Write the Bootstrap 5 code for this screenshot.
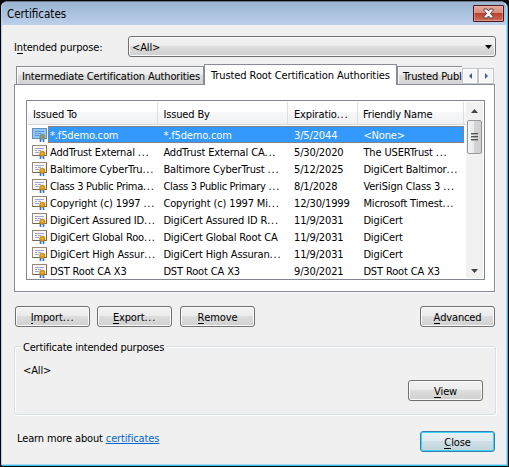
<!DOCTYPE html>
<html lang="en">
<head>
<meta charset="utf-8">
<meta name="viewport" content="width=device-width, initial-scale=1">
<title>Certificates</title>
<link rel="stylesheet" href="https://cdn.jsdelivr.net/npm/bootstrap@5.3.0/dist/css/bootstrap.min.css">
<style>
html,body{height:467px;margin:0;overflow:hidden;background:#050505}
body{font:11px/13px "DejaVu Sans Condensed","DejaVu Sans",sans-serif;font-stretch:condensed;letter-spacing:-.14px;color:#000}
.win{width:506px;height:464px;margin:1px 0 0 1px;background:#f0f0f0;border:1px solid #b5d0ec;border-top-color:#6d7785;border-right-color:#b5d0ec;border-radius:6px 6px 0 0;box-shadow:1px 1px 0 #27c5e8}
.titlebar{height:23px;background:linear-gradient(#9ab4d2,#bbd0ea);border-radius:5px 5px 0 0;padding:0 2px 0 5px;font-size:11.5px;letter-spacing:0}
.titletext{padding-top:6px}
.winclose{width:31px;height:17px;margin-top:3px;border:1px solid #4a1620;border-radius:1px;background:linear-gradient(#e9a99b 0,#d98a7b 45%,#b8402c 50%,#cf6c55 100%);box-shadow:inset 0 0 0 1px #efb8ae88;padding:0}
.winclose svg{display:block;margin:auto}
.content{padding:11px 10px 0 12px}
.win u{text-decoration:none;box-shadow:0 1px 0 #000;display:inline-block;line-height:11px}
.combo{width:368px;height:21px;border:1px solid #707070;border-radius:3px;background:linear-gradient(#f3f3f3 0,#ebebeb 49%,#dddddd 50%,#cfcfcf 100%);box-shadow:inset 0 0 0 1px #fbfbfb;padding:0 3px 0 3px}
.combo span,.lbl{padding-top:1px}
.tabstrip{height:20px;margin-top:7px;padding-left:2px}
.tabx{height:18px;border:1px solid #898c95;border-bottom:0;background:linear-gradient(#f3f3f3 0,#ebebeb 49%,#dddddd 50%,#d3d3d3 100%);box-shadow:inset 1px 1px 0 #fafafa;white-space:nowrap;padding:3px 0 0 5px}
.tabx:first-child{letter-spacing:-.17px}
.tabx.on{height:21px;background:#fff;position:relative;padding:4px 0 0 6px;letter-spacing:-.09px}
.spin{width:16px;height:16px;border:1px solid #c0c5cc;background:#f6f6f6;box-shadow:inset 0 0 0 1px #fff}
.page{width:481px;height:208px;border:1px solid #898c95;background:#fff;padding:15px 0 0 11px;box-shadow:1px 1px 0 #f9f9f9}
.listbox{width:459px;height:180px;border:1px solid #828790;padding:1px}
.rows{width:438px}
.gridrow{display:grid;grid-template-columns:130px 130px 70px 106px;height:17px;white-space:nowrap}
.gridrow>span{padding-left:6px;overflow:hidden}
.gridrow>span:nth-child(even){padding-left:5.4px}
.head{height:23px;line-height:26px;margin-bottom:1px;grid-template-rows:22px;background:linear-gradient(#fff 0,#fff 45%,#f7f8fa 46%,#f1f2f4 100%);border-bottom:1px solid #d5d5d5}
.head>span{border-right:1px solid #dedfe1}
.head>span:first-child,.head>span:last-child{padding-left:5px}
.gridrow:not(.head){line-height:20px}
.gridrow>.nm{display:flex;padding-left:4px}
.nm svg{flex:none;margin-right:1px}
.nm b{font-weight:400;padding-left:1px;flex:1}
.dots{font-style:normal;letter-spacing:.75px}
.tight{letter-spacing:-.32px}
.sel{color:#fff;background:linear-gradient(#39f,#39f) 20px 0/416px 17px no-repeat}
.selwrap{outline:1px dotted #c87021;outline-offset:-1px;margin-left:20px;height:17px;margin-top:-17px;width:416px;position:relative}
.sbar{width:17px;height:176px;background:#f1f1f1}
.thumb{width:15px;height:34px;border:1px solid #979797;border-radius:2px;background:linear-gradient(90deg,#f5f5f5,#e9e9eb 45%,#d4d4d7 50%,#cfcfd2)}
.btnw{width:75px;height:21px;padding:1px 0 0;border:1px solid #707070;border-radius:3px;background:linear-gradient(#f3f3f3 0,#ebebeb 49%,#dddddd 50%,#cfcfcf 100%);box-shadow:inset 0 0 0 1px #fbfbfb;font-size:11px;line-height:17px;color:#000;letter-spacing:inherit}
.btnw.def{border-color:#3c7fb1;background:linear-gradient(#eaf2f6 0,#dfe9ef 49%,#cfdfe7 50%,#c2d3da 100%);box-shadow:inset 0 0 0 1px #39d3fa}
.btnw+.btnw{margin-left:7px}
.btnw+.btnw+.btnw{margin-left:8px}
.actions{padding:14px 0 0 1px;width:481px}
.group{width:482px;height:69px;margin-top:19px;border:1px solid #d5dfe5;border-radius:3px;box-shadow:inset 1px 1px 0 #fff,1px 1px 0 #fff;padding:0 12px 0 6px}
.group .cap{background:#f0f0f0;padding:1px 2px 0;margin-top:-7px;align-self:flex-start;height:14px;letter-spacing:-.2px}
.purposes{padding:10px 0 0 2px}
.group .btnw{margin-top:3px}
.foot{width:481px;padding:16px 0 0 3px}
a{color:#06c}
</style>
<script src="https://cdn.jsdelivr.net/npm/bootstrap@5.3.0/dist/js/bootstrap.bundle.min.js"></script>
</head>
<body>
<svg width="0" height="0" class="position-absolute"><defs>
<g id="cert"><rect x=".5" y="2.5" width="14" height="10" fill="#fbf9f5" stroke="#978878"/><path d="M1 12.5H15M14.5 3V13" stroke="#786650"/><path d="M3 5.5H12M3 7.5H5M6 7.5H9M3 9.5H7" stroke="#a3a3d8"/><path d="M8.5 12V16M11.5 12V16" stroke="#2e6bdc" stroke-width="1.6"/><circle cx="10.3" cy="10.7" r="2.7" fill="#d99a10" stroke="#a8700c" stroke-width=".5"/><circle cx="10" cy="10.3" r=".8" fill="#f5ce62"/></g>
<g id="certsel"><rect x=".5" y="2.5" width="14" height="10" fill="#91c8fc" stroke="#6590bd"/><path d="M3 5.5H12M3 7.5H5M6 7.5H9M3 9.5H7" stroke="#5c92e4"/><path d="M8.5 12V16M11.5 12V16" stroke="#2e6bdc" stroke-width="1.6"/><circle cx="10.3" cy="10.7" r="2.7" fill="#829b80" stroke="#6c866f" stroke-width=".5"/></g>
</defs></svg>
<main class="win">
<header class="titlebar d-flex justify-content-between"><span class="titletext">Certificates</span>
<button class="winclose" aria-label="Close"><svg width="13" height="11" viewBox="0 0 13 11"><path d="M2 1H5L6.5 3L8 1H11V2.5L8.5 5.5L11 8.5V10H8L6.5 8L5 10H2V8.5L4.5 5.5L2 2.5Z" fill="#f6f6f6" stroke="#59434b"/></svg></button></header>
<div class="content">
<div class="d-flex align-items-center justify-content-between"><span class="lbl">I<u>n</u>tended purpose:</span>
<div class="combo d-flex align-items-center justify-content-between"><span>&lt;All&gt;</span><svg width="7" height="4"><path d="M0 0H7L3.5 4Z"/></svg></div></div>
<nav class="tabstrip d-flex align-items-end">
<div class="tabx" style="width:188px"><span>Intermediate Certification Authorities</span></div>
<div class="tabx on align-self-start" style="width:193px"><span>Trusted Root Certification Authorities</span></div>
<div class="tabx overflow-hidden border-end-0" style="width:65px"><span>Trusted Publ</span></div>
<div class="d-flex align-self-start pt-1"><div class="spin d-flex align-items-center justify-content-center"><svg width="3" height="6"><path d="M3 0V6L0 3Z" fill="#43568f"/></svg></div><div class="spin d-flex align-items-center justify-content-center"><svg width="3" height="6"><path d="M0 0V6L3 3Z" fill="#4358a8"/></svg></div></div>
</nav>
<section class="page"><div class="listbox d-flex justify-content-between">
<div class="rows">
<div class="gridrow head"><span>Issued To</span><span>Issued By</span><span>Expiratio<i class="dots">...</i></span><span>Friendly Name</span></div>
<div class="gridrow sel"><span class="nm"><svg width="16" height="17"><use href="#certsel"/></svg><b>*.f5demo.com</b></span><span>*.f5demo.com</span><span>3/5/2044</span><span>&lt;None&gt;</span></div>
<div class="selwrap"></div>
<div class="gridrow"><span class="nm"><svg width="16" height="17"><use href="#cert"/></svg><b>AddTrust External <i class="dots">...</i></b></span><span>AddTrust External CA<i class="dots">...</i></span><span>5/30/2020</span><span>The USERTrust <i class="dots">...</i></span></div>
<div class="gridrow"><span class="nm"><svg width="16" height="17"><use href="#cert"/></svg><b>Baltimore CyberTru<i class="dots">...</i></b></span><span>Baltimore CyberTrust <i class="dots">...</i></span><span>5/12/2025</span><span>DigiCert Baltimor<i class="dots">...</i></span></div>
<div class="gridrow"><span class="nm"><svg width="16" height="17"><use href="#cert"/></svg><b class="tight">Class 3 Public Prima<i class="dots">...</i></b></span><span class="tight">Class 3 Public Primary <i class="dots">...</i></span><span>8/1/2028</span><span>VeriSign Class 3 <i class="dots">...</i></span></div>
<div class="gridrow"><span class="nm"><svg width="16" height="17"><use href="#cert"/></svg><b>Copyright (c) 1997 <i class="dots">...</i></b></span><span>Copyright (c) 1997 Mi<i class="dots">...</i></span><span>12/30/1999</span><span>Microsoft Timest<i class="dots">...</i></span></div>
<div class="gridrow"><span class="nm"><svg width="16" height="17"><use href="#cert"/></svg><b>DigiCert Assured ID<i class="dots">...</i></b></span><span>DigiCert Assured ID R<i class="dots">...</i></span><span>11/9/2031</span><span>DigiCert</span></div>
<div class="gridrow"><span class="nm"><svg width="16" height="17"><use href="#cert"/></svg><b>DigiCert Global Roo<i class="dots">...</i></b></span><span>DigiCert Global Root CA</span><span>11/9/2031</span><span>DigiCert</span></div>
<div class="gridrow"><span class="nm"><svg width="16" height="17"><use href="#cert"/></svg><b>DigiCert High Assur<i class="dots">...</i></b></span><span>DigiCert High Assuran<i class="dots">...</i></span><span>11/9/2031</span><span>DigiCert</span></div>
<div class="gridrow"><span class="nm"><svg width="16" height="17"><use href="#cert"/></svg><b>DST Root CA X3</b></span><span>DST Root CA X3</span><span>9/30/2021</span><span>DST Root CA X3</span></div>
</div>
<div class="sbar d-flex flex-column align-items-center"><svg width="7" height="18"><path d="M0 11H7L3.5 7Z" fill="#444"/></svg><div class="thumb d-flex align-items-center justify-content-center"><svg width="7" height="8"><path d="M0 .5H7M0 3.5H7M0 6.5H7" stroke="#555"/><path d="M0 1.5H7M0 4.5H7M0 7.5H7" stroke="#aaa"/></svg></div><svg class="mt-auto" width="7" height="13"><path d="M0 4H7L3.5 8Z" fill="#444"/></svg></div>
</div></section>
<div class="actions d-flex"><button class="btnw"><u>I</u>mport<i class="dots">...</i></button><button class="btnw"><u>E</u>xport<i class="dots">...</i></button><button class="btnw"><u>R</u>emove</button><button class="btnw ms-auto"><u>A</u>dvanced</button></div>
<section class="group d-flex flex-column"><span class="cap">Certificate intended purposes</span><span class="purposes">&lt;All&gt;</span><button class="btnw align-self-end"><u>V</u>iew</button></section>
<footer class="foot d-flex justify-content-between"><span class="lbl">Learn more about <a href="#">certificates</a></span><button class="btnw def"><u>C</u>lose</button></footer>
</div>
</main>
</body>
</html>
